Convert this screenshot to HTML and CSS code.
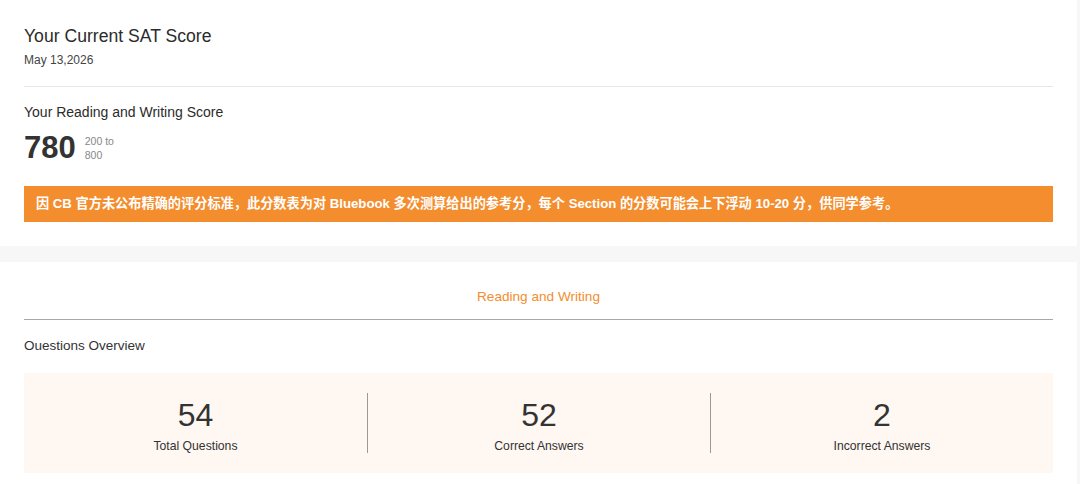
FILE: index.html
```html
<!DOCTYPE html>
<html lang="zh">
<head>
<meta charset="utf-8">
<link rel="stylesheet" href="styles.css">
</head>
<body>
<div class="page">
  <section class="card card-top">
    <h1 class="title">Your Current SAT Score</h1>
    <div class="date">May 13,2026</div>
    <div class="divider"></div>
    <h2 class="subtitle">Your Reading and Writing Score</h2>
    <div class="score-row">
      <span class="score">780</span>
      <span class="range"><span>200 to</span><span>800</span></span>
    </div>
    <div class="notice">因 CB 官方未公布精确的评分标准，此分数表为对 Bluebook 多次测算给出的参考分，每个 Section 的分数可能会上下浮动 10-20 分，供同学参考。</div>
  </section>
  <section class="card card-bottom">
    <div class="tab">Reading and Writing</div>
    <h3 class="section-title">Ouestions Overview</h3>
    <div class="overview">
      <div class="stat"><div class="num">54</div><div class="label">Total Questions</div></div>
      <div class="stat"><div class="num">52</div><div class="label">Correct Answers</div></div>
      <div class="stat"><div class="num">2</div><div class="label">Incorrect Answers</div></div>
    </div>
  </section>
</div>
</body>
</html>
```
FILE: styles.css
```css
* { box-sizing: border-box; }
html, body { margin: 0; padding: 0; }
body {
  background: #f7f7f7;
  font-family: "Liberation Sans", Arial, "Noto Sans CJK SC", sans-serif;
  color: #333;
}
.page {
  width: 1077px;
  display: flex;
  flex-direction: column;
  gap: 16px;
}
.card {
  background: #fff;
  padding: 0 24px;
}
.card-top {
  padding-top: 24px;
  padding-bottom: 24px;
}
.title {
  margin: 0;
  font-size: 17.6px;
  line-height: 24px;
  font-weight: 400;
  color: #2b2b2b;
}
.date {
  margin-top: 3px;
  font-size: 12px;
  line-height: 18px;
  color: #444;
}
.divider {
  margin-top: 17px;
  height: 1px;
  background: #e6e6e6;
}
.subtitle {
  margin: 15px 0 0;
  font-size: 14px;
  line-height: 20px;
  font-weight: 400;
  color: #2b2b2b;
}
.score-row {
  margin-top: 8px;
  display: flex;
  align-items: center;
  gap: 9px;
  height: 36px;
}
.score {
  font-size: 31px;
  line-height: 36px;
  font-weight: 700;
  color: #333;
}
.range {
  display: flex;
  flex-direction: column;
  font-size: 10.5px;
  line-height: 14px;
  color: #888;
}
.notice {
  margin-top: 20px;
  height: 36px;
  line-height: 36px;
  background: #f38d2e;
  color: #fff;
  font-size: 13.2px;
  font-weight: 700;
  padding: 0 12px;
  white-space: nowrap;
}
.card-bottom {
  padding-top: 25px;
  padding-bottom: 11px;
}
.tab {
  text-align: center;
  font-size: 13.6px;
  line-height: 20px;
  color: #f38d2e;
  padding-bottom: 12px;
  border-bottom: 1px solid #a8a8a8;
}
.section-title {
  margin: 16px 0 0;
  font-size: 13.5px;
  line-height: 20px;
  font-weight: 400;
  color: #333;
}
.overview {
  margin-top: 17px;
  background: #fef7f2;
  padding: 20px 0;
  display: grid;
  grid-template-columns: 1fr 1fr 1fr;
}
.stat {
  display: flex;
  flex-direction: column;
  align-items: center;
  height: 60px;
}
.stat + .stat {
  border-left: 1px solid #999;
}
.num {
  font-size: 32px;
  line-height: 44px;
  font-weight: 400;
  color: #333;
}
.label {
  font-size: 12.2px;
  line-height: 18px;
  color: #333;
}
```
